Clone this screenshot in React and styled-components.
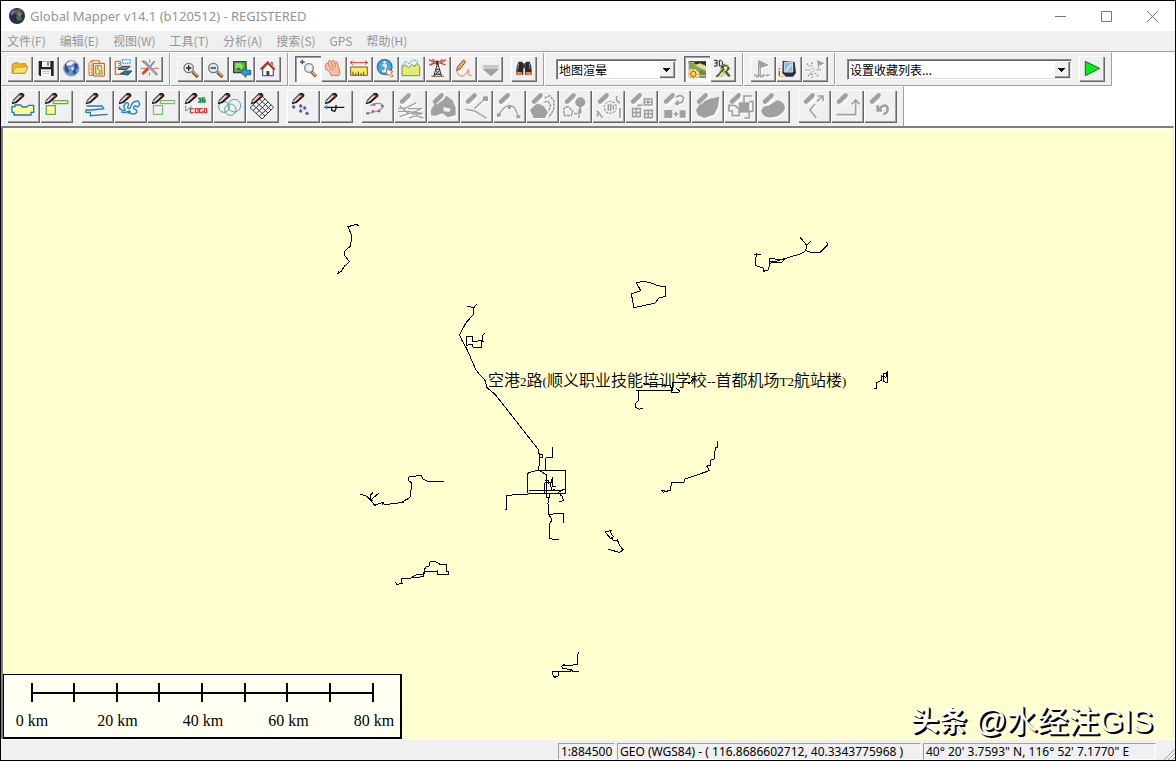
import React from 'react';
import styled, { createGlobalStyle, css } from 'styled-components';

const GlobalStyle = createGlobalStyle`
  * { box-sizing: border-box; }
  body { margin: 0; background: #fff; }
`;

const uiFont = "'Noto Sans', 'Noto Sans CJK SC', sans-serif";

const Window = styled.div`
  display: flex;
  flex-direction: column;
  height: 100vh;
  border: 1px solid #000;
  background: #fff;
  font: 12px/20px ${uiFont};
  color: #000;
  overflow: hidden;
`;

const TitleBar = styled.header`
  display: flex;
  align-items: center;
  gap: 5px;
  height: 30px;
  padding-left: 8px;
  background: #fff;
  color: #949494;
`;

const Title = styled.h1`
  flex: 1;
  margin: 0;
  font-size: 13px;
  font-weight: 400;
  white-space: nowrap;
`;

const Caption = styled.div`
  display: flex;
`;

const CaptionButton = styled.button`
  display: grid;
  place-items: center;
  width: 46px;
  height: 30px;
  padding: 0;
  border: 0;
  background: none;
`;

const MenuBar = styled.nav`
  display: flex;
  gap: 14px;
  height: 21px;
  padding-left: 6px;
  background: #f0f0f0;
  border-bottom: 1px solid #a0a0a0;
`;

const MenuItem = styled.button`
  padding: 0;
  border: 0;
  background: none;
  color: #969696;
  font: 12px/18px 'Noto Sans CJK SC', sans-serif;
  white-space: nowrap;
`;

const Rebar = styled.div`
  display: flex;
  flex-direction: column;
  align-items: flex-start;
  background: #fff;
`;

const Band = styled.div`
  display: flex;
  align-items: center;
  padding: 3px 6px;
  gap: ${p => (p.$tall ? '8px' : '0')};
  height: ${p => (p.$tall ? '40px' : '34px')};
  background: #f0f0f0;
  border-top: 1px solid #fff;
  border-right: 1px solid #a0a0a0;
  border-bottom: ${p => (p.$tall ? '0' : '1px solid #a0a0a0')};
`;

const Group = styled.div`
  display: flex;
  align-items: center;
  gap: ${p => p.$gap || 0}px;
`;

const Separator = styled.span`
  width: 2px;
  height: 33px;
  margin: 0 6px;
  border-left: 1px solid #a0a0a0;
  border-right: 1px solid #fff;
`;

const ToolButton = styled.button`
  display: block;
  flex: none;
  width: ${p => p.$size}px;
  height: ${p => p.$size}px;
  padding: 0;
  border: 0;
  background: #f0f0f0;
  box-shadow: inset 1px 1px 0 #fff, inset -1px -1px 0 #696969, inset -2px -2px 0 #a0a0a0;
  ${p => p.$pressed && css`
    background: #f8f8f8;
    box-shadow: inset 1px 1px 0 #696969, inset 2px 2px 0 #a0a0a0, inset -1px -1px 0 #fff;
  `}
  svg {
    display: block;
    width: 100%;
    height: 100%;
    ${p => p.disabled && 'filter: drop-shadow(1px 1px 0 #fff);'}
  }
`;

const ComboBox = styled.label`
  position: relative;
  display: flex;
  width: ${p => p.$width}px;
  height: 21px;
  margin: 0 7px 0 5px;
  border: 1px solid;
  border-color: #888 #fff #fff #888;
  background: #fff;
  box-shadow: inset 1px 1px 0 #696969, inset -1px -1px 0 #e3e3e3;
`;

const ComboSelect = styled.select`
  width: 100%;
  padding: 0 18px 0 2px;
  border: 0;
  appearance: none;
  background: transparent;
  color: #000;
  font: 12px/19px 'Noto Sans CJK SC', sans-serif;
`;

const ComboArrow = styled.span`
  position: absolute;
  top: 1px;
  right: 1px;
  width: 16px;
  height: 17px;
  background: #f0f0f0;
  box-shadow: inset 1px 1px 0 #fff, inset -1px -1px 0 #696969, inset -2px -2px 0 #a0a0a0;
  pointer-events: none;
  svg { display: block; }
`;

const MapView = styled.main`
  position: relative;
  flex: 1;
  min-height: 0;
  margin-right: 1px;
  border: solid #808080;
  border-width: 2px 0 0 2px;
  border-right: 1px solid #e8e8e8;
  background: #ffffcf;
  box-shadow: inset 0 1px 0 #fffff0;
  overflow: hidden;
`;

const Routes = styled.svg`
  position: absolute;
  left: 0;
  top: 0;
  width: 1170px;
  height: 611px;
  fill: none;
  stroke: #000;
  shape-rendering: crispEdges;
  polyline { vector-effect: non-scaling-stroke; }
`;

const RouteLabel = styled.span`
  position: absolute;
  left: 485px;
  top: 241px;
  font: 16px/20px 'Noto Sans CJK SC', sans-serif;
  font-weight: 350;
  white-space: nowrap;
`;

const Latin = styled.span`
  font: 13px 'Liberation Serif', serif;
`;

const ScaleBar = styled.div`
  position: absolute;
  left: 0;
  bottom: 0;
  width: 399px;
  height: 65px;
  border: solid #000;
  border-width: 1px 2px 2px 1px;
  background: #fffff2;
`;

const Ruler = styled.svg`
  display: block;
  width: 345px;
  height: 19px;
  margin: 8px 0 0 27px;
  shape-rendering: crispEdges;
`;

const ScaleLabels = styled.div`
  display: flex;
  justify-content: space-between;
  margin: 9px 4px 0 6px;
  font: 16px/20px 'Liberation Serif', serif;
`;

const ScaleLabel = styled.span`
  width: 44px;
  text-align: center;
`;

const Watermark = styled.div`
  position: absolute;
  right: 20px;
  bottom: 0;
  display: flex;
  align-items: center;
  gap: 8px;
  color: #fff;
  text-shadow: 1px 1px 0 #000, 2px 2px 0 #000;
  font: 31px/34px 'Liberation Sans', 'Noto Sans CJK SC', sans-serif;
  white-space: nowrap;
`;

const Brand = styled.strong`
  font-size: 28px;
  font-weight: 700;
`;

const StatusBar = styled.footer`
  display: flex;
  justify-content: flex-end;
  gap: 2px;
  height: 21px;
  padding-top: 3px;
  background: #f0f0f0;
  border-top: 1px solid #fff;
`;

const StatusCell = styled.span`
  width: ${p => p.$width}px;
  height: 17px;
  padding-left: 2px;
  border: 1px solid;
  border-color: #a0a0a0 #fff #fff #a0a0a0;
  line-height: 16px;
  white-space: nowrap;
`;

const Grip = styled.svg`
  width: 17px;
  height: 17px;
`;

const GRAY = '#a0a0a0';

const Icon = ({ x, y, size = 78, children }) => (
  <svg viewBox={`${x} ${y} ${size} ${size}`} fill="none" strokeWidth="3" aria-hidden="true">
    {children}
  </svg>
);

const Pencil = ({ x, y, off }) => (
  <g transform={`translate(${x} ${y})`}>
    {off ? (
      <path d="M24 35L44 16" stroke={GRAY} strokeWidth="13" strokeLinecap="round" />
    ) : (
      <>
        <path d="M14 43L18 30L39 9H47L52 14V19L29 39Z" fill="#15151a" />
        <path d="M23 33L40 17" stroke="#e2cfc8" strokeWidth="7" />
        <path d="M38 16L42 12L48 18L44 22Z" fill="#d8402f" />
        <path d="M18 37L20 31L25 36Z" fill="#fff" />
      </>
    )}
  </g>
);

const Lens = ({ x, y, minus }) => (
  <g>
    <path d={`M${x + 12} ${y + 12}l16 15`} stroke="#77562d" strokeWidth="10" />
    <path d={`M${x + 15} ${y + 12}l13 12`} stroke="#e6ae65" strokeWidth="5" />
    <circle cx={x} cy={y} r="14" fill="#dcebf0" stroke="#777" strokeWidth="4" />
    <path d={`M${x - 8} ${y}h16${minus ? '' : `M${x} ${y - 8}v16`}`} stroke="#22262e" strokeWidth="4" />
  </g>
);

const fileTools = [
  ['打开', 21, <><path d="M36 219L37 192L51 187L57 192L77 191L79 201L82 202L74 220Z" fill="#f4b726" stroke="#bd8a20" /><path d="M37 220L47 202L84 200L75 219Z" fill="#ffe570" stroke="#c99722" /></>],
  ['保存', 99, <><path d="M116 183H161V228H120L116 224Z" fill="#20242b" /><path d="M126 184H151V201H126Z" fill="#f4f4f4" /><path d="M123 208H153V228H123Z" fill="#fff" /><path d="M127 214H149M127 220H149" stroke="#b8b8b8" /><path d="M144 186V197" stroke="#555" strokeWidth="4" /></>],
  ['在线数据', 177, <><circle cx="214" cy="205" r="23" fill="#6d96cc" stroke="#8793b4" /><path d="M195 194L205 184L216 188L210 198L201 201L208 212L203 220L194 210ZM221 193L232 191L234 203L226 209L230 219L220 223L217 214L224 205Z" fill="#2c4f98" /><path d="M199 190Q211 180 224 186L213 196L200 198ZM212 204L222 201L219 212Z" fill="#edf4fc" /></>],
  ['目录', 255, <><path d="M267 190L274 182H298V226H267Z" fill="#fff" stroke="#d46a25" /><path d="M276 183V225" stroke="#d46a25" /><path d="M281 190H313V228H281Z" fill="#fff7d6" stroke="#af581f" /><path d="M287 196H304L307 222H287Z" fill="#f2e391" stroke="#6f9658" /><path d="M296 197L292 207L301 213L297 221" stroke="#6c8ac0" /><path d="M269 197H278M269 207H278M269 217H278" stroke="#ef9455" /></>],
  ['图层', 333, <><path d="M346 184V223H362M346 184H363M346 203H360" stroke="#e27543" strokeWidth="4" /><path d="M367 179H391V190H367Z" fill="#dff4ff" stroke="#3f94bd" strokeDasharray="4 2" /><path d="M354 208L367 199H391L379 209Z" fill="#777d92" stroke="#444" /><path d="M360 222L374 213H396L384 225Z" fill="#258356" stroke="#27598f" /><path d="M354 192L362 188V197H355" fill="#fff" stroke="#678" /></>],
  ['配置', 411, <><path d="M424 182L474 226M422 205H439M460 205H477M449 178V188M449 217V228" stroke="#db7042" /><path d="M429 183L436 188L470 223" stroke="#687c9c" strokeWidth="7" /><path d="M464 184L447 204" stroke="#7e8593" strokeWidth="5" /><path d="M445 205L427 222" stroke="#d34435" strokeWidth="8" /><path d="M431 184L468 221" stroke="#fff" strokeWidth="2" /></>],
];

const zoomTools = [
  ['放大', 531, <Lens x={566} y={204} />],
  ['缩小', 609, <Lens x={640} y={204} minus />],
  ['全图', 687, <><path d="M701 185H738V218H701Z" fill="#4aae35" stroke="#2a405f" strokeWidth="4" /><path d="M706 190H724L730 201L720 212H706Z" fill="#98dc67" /><path d="M706 209L716 201L726 213" fill="#33772b" /><path d="M752 211H739V203L722 217L738 232V224H752Z" fill="#3699ce" stroke="#175b8d" /></>],
  ['主页', 765, <><path d="M788 207V227H820V207L803 190Z" fill="#fff" stroke="#416bad" strokeWidth="4" /><path d="M799 227V213H808V227" fill="#653d2c" /><path d="M812 186H818V199" fill="#b82e21" /><path d="M782 208L803 187L824 209" stroke="#a8341f" strokeWidth="6" /><path d="M783 204L803 184L823 204" stroke="#e0573a" strokeWidth="2" /></>],
];

const modeTools = [
  ['缩放工具', 45, <><path d="M60 36H74M67 29V43" stroke="#285696" strokeWidth="4" /><path d="M94 65L108 79" stroke="#765c34" strokeWidth="10" /><path d="M96 66L108 77" stroke="#e1ba70" strokeWidth="5" /><circle cx="87" cy="54" r="13" fill="#e6f0ee" stroke="#858585" strokeWidth="4" /></>, true],
  ['平移', 123, <path d="M137 52C134 42 139 36 145 42C143 30 150 28 154 36C157 28 163 30 164 38C170 32 174 38 174 46L180 67L176 77H154L147 64L137 58ZM145 42L152 55M154 37L159 52M164 38L167 52M152 60L161 57" fill="#f8bda5" stroke="#cf8068" />],
  ['测量', 201, <><path d="M210 38H263M218 32L211 38L218 44M255 32L263 38L255 44" stroke="#d74430" /><path d="M212 51H262V76H212Z" fill="#ffe96a" stroke="#745c2b" /><path d="M219 75V65M227 75V69M235 75V65M243 75V69M251 75V65" stroke="#554922" /></>],
  ['要素信息', 279, <><circle cx="314" cy="51" r="22" fill="#46aadc" stroke="#2376ae" strokeWidth="4" /><path d="M307 46H317V62M306 64H325" stroke="#fff" strokeWidth="6" /><circle cx="314" cy="37" r="4" fill="#fff" /><path d="M319 56L339 65L332 69L339 78L334 81L326 72L321 77Z" fill="#fff" stroke="#c96631" /></>],
  ['剖面', 357, <><path d="M366 77V50L376 45L386 53L395 44L405 49L410 40L419 50V77Z" fill="#e2ed79" stroke="#749a3c" /><path d="M366 48L377 33L387 42L398 30L409 31L417 43" stroke="#5398c0" strokeDasharray="6 3" /></>],
  ['视域', 435, <><path d="M473 40L461 79M473 40L485 79M467 58H479M463 73H483M466 60L482 76M480 60L463 76" stroke="#303030" /><path d="M472 32V44" stroke="#333" strokeWidth="8" /><path d="M447 29L465 39L448 45M498 29L481 39L497 45M457 28L467 36M488 28L478 36" stroke="#d93a39" strokeWidth="4" /><path d="M454 79H492" stroke="#6a6232" /></>],
  ['数字化', 513, <><path d="M530 62L532 51L550 30L557 35L540 57Z" fill="#f3af60" stroke="#9f4c20" /><path d="M531 63C533 78 544 81 553 76S563 56 566 59S556 78 575 76" stroke="#d9854a" /></>],
  ['更多', 591, <><path d="M608 48H657M610 54H655" stroke={GRAY} /><path d="M608 57H657L633 79Z" fill={GRAY} /></>],
];

const findTool = ['查找', 693, <><path d="M708 74L710 50L716 35H727L730 43V74ZM735 74V43L738 35H749L754 50L756 74Z" fill="#292929" /><path d="M728 40H738V55H728Z" fill="#444" /><path d="M716 41L713 58M747 41L750 58" stroke="#8d8d8d" /><path d="M708 66H727V75H708ZM737 66H756V75H737Z" fill="#cf7046" /><path d="M713 65L721 73M741 66L751 73" stroke="#f2bb95" /></>];

const shaderTools = [
  ['地形渲晕', 372, <><path d="M386 34H438V83H386Z" fill="#8ba454" /><path d="M386 34H438V51H420L403 40H386Z" fill="#263321" /><path d="M404 45L421 40L438 49V61L420 54Z" fill="#e8dba8" /><path d="M418 60L438 66V83H413Z" fill="#6d8a4c" /><path d="M386 58H408L418 70V83H386Z" fill="#fbe9a0" /><path d="M387 38H404M417 46H435M420 77H437" stroke="#bde293" /><path d="M388 60L412 84M412 60L388 84M400 56V87M385 72H416" stroke="#ff8c26" strokeWidth="3" /><circle cx="400" cy="72" r="8" fill="#ffe943" stroke="#e53b25" /></>, true],
  ['三维视图', 450, <><path d="M462 31H471V48H462M464 39H471M478 31V48H482L487 43V35L482 31Z" stroke="#1d1d1d" /><path d="M466 81L477 70L481 53L493 42L505 44L511 57L503 63L514 77L503 82L494 72L486 81Z" fill="#c3ca84" /><path d="M483 54L491 46L490 58L478 72L469 80M497 45L506 55L497 65L509 79" stroke="#3c4d33" strokeWidth="5" /><path d="M491 55L500 52L497 62M480 76L488 67" stroke="#fff1c5" strokeWidth="4" /></>],
];

const gpsTools = [
  ['开始跟踪', 570, <><path d="M596 32L624 45L601 53V76" fill={GRAY} stroke={GRAY} /><path d="M596 32V76" stroke={GRAY} strokeWidth="4" /><path d="M582 76H630M588 80H610" stroke={GRAY} strokeWidth="5" strokeDasharray="10 2" /></>, false, true],
  ['定位', 648, <><path d="M668 32L704 36L708 69L699 80H678L667 70Z" fill="#29313d" /><path d="M673 37H698V66H673Z" fill="#8eb8e6" stroke="#d9e5f2" /><path d="M678 63L694 42" stroke="#d9ecff" strokeWidth="5" /><path d="M658 62V79M658 54V58" stroke="#d32" strokeWidth="4" /><path d="M662 79H670" stroke="#ee9431" /></>],
  ['标记', 726, <><path d="M741 41L751 51M744 78L756 68M756 37V48M737 60H748M770 60H785M757 71V85M765 69L776 80" stroke={GRAY} strokeWidth="5" strokeDasharray="5 3" /><circle cx="757" cy="60" r="6" stroke={GRAY} strokeDasharray="4 2" /><path d="M771 32L791 40L776 46V57" fill={GRAY} stroke={GRAY} /></>, false, true],
];

const runTool = ['运行', 717, <path d="M736 184V227L779 205Z" fill="#00ef1a" stroke="#146722" />];

const areaTools = [
  ['新建面', 21, <path d="M36 320V337H42V345H93V337H101V316H86L80 321H67L62 315H45V320Z" fill="#ffffa0" stroke="#2474b5" strokeWidth="4" />],
  ['新建矩形', 120, <><path d="M139 317H166V343H139Z" fill="#ffffa0" stroke="#61ae50" strokeWidth="4" /><path d="M160 302H203V311H160Z" fill="#f4f9b4" stroke="#61ae50" strokeWidth="4" /></>],
];

const drawTools = [
  ['新建线', 243, <path d="M260 318H306L311 326L275 330H258V337H271V347L323 343" stroke="#237bb9" strokeWidth="4" />],
  ['新建曲线', 342, <path d="M360 319Q355 326 365 329Q382 338 371 319Q381 300 386 313Q378 328 390 324L398 308Q414 298 418 308Q421 316 412 321Q400 313 401 326Q418 333 406 341Q389 345 387 333Q375 341 363 335M383 340L392 334" stroke="#2480bd" strokeWidth="4" />],
  ['矩形线', 441, <path d="M460 317H488V343H460ZM481 302H524V311H481Z" stroke="#61ae50" strokeWidth="3" />],
  ['坐标几何', 540, <><path d="M557 317V333L576 318" stroke="#4f9cd0" strokeWidth="3" /><path d="M594 295H602V300H597H602V306H594M615 294H607V306H615V300H607" stroke="#138d3e" strokeWidth="4" /><path d="M581 326H571V338H581M586 326H594V338H586ZM608 326H599V338H608V332M613 326H620V338H613Z" stroke="#d13b36" strokeWidth="4" /></>],
  ['距离环', 639, <><circle cx="672" cy="321" r="16" stroke="#58a88d" /><circle cx="691" cy="329" r="17" stroke="#59a96e" /><circle cx="703" cy="317" r="19" stroke="#4e9dca" /></>],
  ['网格', 738, <path d="M750 323L786 288L821 322L786 357ZM759 314L795 348M768 305L804 339M777 296L813 330M759 332L795 297M768 341L804 306M777 350L813 315" stroke="#303b3c" />],
];

const pointTools = [
  ['新建点', 21, <path d="M36 171H46M41 166V176M57 168H67M62 163V173M57 183H67M62 178V188M69 174H79M74 169V179M76 190H86M81 185V195" stroke="#61539a" strokeWidth="5" />],
  ['移动点', 120, <><path d="M133 172H193M155 172V181L164 184L168 176V165" stroke="#151515" strokeWidth="4" /><path d="M140 165V178" stroke="#398de1" strokeWidth="4" /></>],
];

const vertexTool = ['编辑折点', 243, <><path d="M271 167Q281 158 301 161Q311 164 307 174Q288 188 259 191" stroke="#6ca0cb" strokeWidth="4" /><path d="M278 165H286M303 168H311M259 190H267M275 183H283M293 184H301" stroke="#db3029" strokeWidth="5" /></>];

const editTools = [
  ['变形', 342, 120, <path d="M354 175H376L393 166M354 184H380L405 187L428 190M359 200L386 191L406 185L427 174M359 167L386 191M391 168L409 158M384 176H424M388 204L409 197L430 204M395 192H425" stroke={GRAY} strokeWidth="4" />],
  ['平滑', 441, 120, <path d="M453 180L465 160L487 152L499 137L518 151L527 173V196L503 202L488 190L466 198L453 196ZM490 172L512 176L508 186L492 184Z" fill={GRAY} fillRule="evenodd" />],
  ['分割', 540, 120, <><path d="M556 178L584 183L620 205M583 176L616 145" stroke={GRAY} strokeWidth="4" /><path d="M609 139H624V153H609Z" fill={GRAY} /></>],
  ['延长', 639, 120, <><path d="M657 194Q679 155 704 173L715 199" stroke={GRAY} strokeWidth="4" /><path d="M651 190H662V200H651ZM684 166H693V177H684ZM709 196H721V205H709Z" fill={GRAY} /></>],
  ['复制', 738, 120, <><path d="M750 180L771 160L791 168L804 187L795 204H761Z" fill={GRAY} /><path d="M794 144L809 137L822 153V177L807 202M793 156L804 154L812 166L806 184" stroke={GRAY} strokeWidth="5" strokeDasharray="9 2" /></>],
  ['旋转', -3, 120, <><path d="M11 180Q13 171 25 170L38 183L34 197H14ZM57 204V181L66 187M42 191H58" stroke={GRAY} strokeWidth="5" strokeDasharray="9 2" /><circle cx="61" cy="157" r="15" fill={GRAY} /><path d="M61 170V191" stroke={GRAY} strokeWidth="6" /></>],
  ['缩放', 96, 120, <><circle cx="151" cy="172" r="18" stroke={GRAY} strokeDasharray="8 3" strokeWidth="4" /><path d="M145 163V182M152 161V184M160 166V179M111 182L128 203M170 138V151L180 160M113 190V200M180 174V204" stroke={GRAY} strokeWidth="5" /></>],
  ['阵列', 195, 120, <path d="M218 176H241V200H218ZM253 147H276V165H253ZM254 181H277V203H254ZM229 176V200M217 188H241M264 147V165M253 156H276M265 181V203M254 192H277M232 166H247" stroke={GRAY} strokeWidth="5" />],
  ['转换', 294, 120, <><path d="M313 180H337V204H313ZM359 181H377V203H359Z" fill={GRAY} /><path d="M348 143Q361 130 371 144L367 157L348 161M355 152L347 161L356 165M341 192H355M348 185V199" stroke={GRAY} strokeWidth="5" /></>],
  ['合并', 393, 120, <path d="M408 181L422 158L449 146L478 140L474 171L462 194L433 204L414 196Z" fill={GRAY} />],
  ['裁剪', 492, 120, <><path d="M536 157H568V188H536Z" fill={GRAY} /><path d="M507 166H523L538 177V197H517V183H507ZM577 138H552V158M568 155H579V184H568V204H553" stroke={GRAY} strokeWidth="5" /></>],
  ['缓冲区', 591, 120, <path d="M604 184Q606 168 624 168L651 151Q676 156 675 176Q665 199 637 202Q611 206 604 184Z" fill={GRAY} />],
];

const undoTools = [
  ['移动折线', 714, 120, <path d="M769 204L750 180L765 162M771 155L788 138M773 138H789V154" stroke={GRAY} strokeWidth="5" />],
  ['插入折线', 813, 120, <path d="M830 194H887V151M875 163L887 150L899 163" stroke={GRAY} strokeWidth="5" />],
  ['撤销', 72, 270, <path d="M113 316V331H126M115 329L127 319Q139 312 143 325Q144 339 130 343" stroke={GRAY} strokeWidth="8" />],
];

const SmallTools = ({ items, y }) => (
  <Group>
    {items.map(([name, x, art, pressed, disabled]) => (
      <ToolButton key={name} $size={26} $pressed={pressed} disabled={disabled} aria-label={name}>
        <Icon x={x} y={y}>{art}</Icon>
      </ToolButton>
    ))}
  </Group>
);

const LargeTools = ({ items, y }) => (
  <Group>
    {items.map(([name, x, art]) => (
      <ToolButton key={name} $size={33} aria-label={name}>
        <Icon x={x} y={y} size={99}>{art}<Pencil x={x} y={y} /></Icon>
      </ToolButton>
    ))}
  </Group>
);

const DisabledTools = ({ items }) => (
  <Group>
    {items.map(([name, x, y, art]) => (
      <ToolButton key={name} $size={33} disabled aria-label={name}>
        <Icon x={x} y={y} size={99}>
          {art}
          <path d={`M${x + 24} ${y + 36}L${x + 44} ${y + 17}`} stroke="#f0f0f0" strokeWidth="20" />
          <Pencil x={x} y={y} off />
        </Icon>
      </ToolButton>
    ))}
  </Group>
);

const Combo = ({ label, value, width }) => (
  <ComboBox $width={width}>
    <ComboSelect aria-label={label}><option>{value}</option></ComboSelect>
    <ComboArrow>
      <svg width="16" height="17" shapeRendering="crispEdges"><path d="M4 7H11L7.5 11Z" /></svg>
    </ComboArrow>
  </ComboBox>
);

/* Route geometry, grouped by survey tile; each tile is stored at three units per map pixel. */
const tiles = [
  [320, 210, [
    '116,48 110,43 84,50 95,76 92,108 73,124 75,138 88,155 72,170 64,184 54,190 55,182',
    '470,283 462,292 462,312 438,338 419,374 424,388 440,416 468,480',
    '441,289 464,293',
    '494,369 488,376 488,392 458,394 458,380 440,380 440,406 456,403 459,412 485,412 485,396 491,396',
  ]],
  [480, 360, [
    '-12,30 0,45 16,62 20,82 46,104 176,270 179,300 176,330 200,345 200,362',
    '179,284 188,284 188,292 179,292',
    '217,262 217,292 198,294 198,330',
    '143,400 143,340 160,334 176,331 255,331 257,400 146,402',
    '146,391 240,391', '76,448 79,448 79,406 146,402',
    '194,368 194,400 208,400 208,412 200,412', '194,368 212,368 214,391 226,388',
    '217,350 217,380 228,380', '214,356 214,370', '196,362 206,362 206,372',
    '200,362 200,412 206,414 204,430 206,463 250,460 250,490',
    '206,463 216,480 208,492 208,536 226,538 238,540',
    '236,425 250,422 248,410 240,404', '234,398 244,391 255,388',
    '468,92 577,91 577,68', '475,92 475,122 467,130 467,142 478,148 488,145',
    '488,70 505,75 530,72 550,76 575,75', '572,75 575,97 598,96 598,92 588,84',
    '577,68 600,66 630,70 640,56 634,52 646,48',
    '714,243 712,262 706,262 703,297 693,300 693,316 680,318 688,332 613,358 613,366 574,368 572,390 550,397 544,391 556,391',
  ]],
  [600, 220, [
    '600,52 612,66 620,76 617,92 604,101 560,114 510,130 505,150 490,154 490,144 466,136 469,98',
    '462,105 484,105', '632,64 620,76', '617,92 630,96 660,97 684,74 680,66',
    '510,130 510,116 552,119 545,128 510,125',
    '109,188 134,184 158,190 172,197 197,200 197,229 176,234 166,249 102,263 94,222 122,212 109,188',
    '823,505 830,504 830,488 846,480 846,468 858,472 862,452', '862,452 862,488 850,484 850,462 860,460',
  ]],
  [340, 460, [
    '60,102 78,108 92,120 104,136 126,128 134,134 184,128 210,112 216,70 206,62 206,51 243,46 248,56 268,66 312,64',
    '92,120 92,104 100,97', '92,120 116,100', '80,108 98,122', '190,128 194,120 208,116', '126,136 132,128',
    '166,366 170,374 186,370 184,356 212,354 230,344 250,344 256,322 268,318 270,305 286,305 302,314 320,312 320,334 326,336 326,343 292,343 292,333 254,336 250,350 214,354',
    '796,216 814,211 812,218 820,230 812,236 796,216', '816,232 820,242 832,240 840,258 850,270 838,277 820,272 803,267',
    '716,577 711,590 713,614 685,616 665,618 668,626 692,628 700,636 718,635',
    '692,636 638,636 638,644 644,652 654,648 656,636', '680,616 668,614', '685,636 698,630',
  ]],
];

const ticks = [1, 43, 86, 128, 171, 214, 256, 299, 342];
const menus = ['文件(F)', '编辑(E)', '视图(W)', '工具(T)', '分析(A)', '搜索(S)', 'GPS', '帮助(H)'];

export default function App() {
  return (
    <>
      <GlobalStyle />
      <Window>
        <TitleBar>
          <svg width="16" height="16" viewBox="0 0 16 16" aria-hidden="true">
            <circle cx="8" cy="8" r="8" fill="#262d4b" />
            <path d="M6 2L11 1L14 5L12 8L13 12L9 13L7 10L8 7L5 5Z" fill="#56634f" />
            <path d="M2 4L6 1L5 5L2 8Z" fill="#7379a2" />
            <path d="M9 4L12 6L10 9Z" fill="#8b8f67" />
          </svg>
          <Title>Global Mapper v14.1 (b120512) - REGISTERED</Title>
          <Caption>
            <CaptionButton aria-label="最小化"><svg width="11" height="11" stroke="#777"><path d="M0 5.5H11" /></svg></CaptionButton>
            <CaptionButton aria-label="最大化"><svg width="11" height="11" stroke="#777" fill="none"><path d="M.5 .5H10.5V10.5H.5Z" /></svg></CaptionButton>
            <CaptionButton aria-label="关闭"><svg width="11" height="11" stroke="#777"><path d="M0 0L11 11M11 0L0 11" /></svg></CaptionButton>
          </Caption>
        </TitleBar>
        <MenuBar>
          {menus.map(m => <MenuItem key={m}>{m}</MenuItem>)}
        </MenuBar>
        <Rebar>
          <Band>
            <SmallTools items={fileTools} y={168} />
            <Separator />
            <SmallTools items={zoomTools} y={168} />
            <Separator />
            <Group $gap={8}>
              <SmallTools items={modeTools} y={18} />
              <SmallTools items={[findTool]} y={18} />
            </Group>
            <Separator />
            <Combo label="渲染方式" value="地图渲晕" width={121} />
            <SmallTools items={shaderTools} y={18} />
            <Separator />
            <SmallTools items={gpsTools} y={18} />
            <Separator />
            <Combo label="收藏列表" value="设置收藏列表..." width={225} />
            <SmallTools items={[runTool]} y={168} />
          </Band>
          <Band $tall>
            <LargeTools items={areaTools} y={270} />
            <LargeTools items={drawTools} y={270} />
            <LargeTools items={pointTools} y={120} />
            <Group>
              <LargeTools items={[vertexTool]} y={120} />
              <DisabledTools items={editTools} />
            </Group>
            <DisabledTools items={undoTools} />
          </Band>
        </Rebar>
        <MapView>
          <Routes viewBox="3 128 1170 611">
            {tiles.map(([x, y, lines]) => (
              <g key={`${x}-${y}`} transform={`translate(${x} ${y}) scale(0.33333)`}>
                {lines.map(points => <polyline key={points} points={points} />)}
              </g>
            ))}
          </Routes>
          <RouteLabel>
            空港<Latin>2</Latin>路<Latin>(</Latin>顺义职业技能培训学校<Latin>--</Latin>首都机场<Latin>T2</Latin>航站楼<Latin>)</Latin>
          </RouteLabel>
          <ScaleBar>
            <Ruler>
              <path d="M0 9H343V11H0Z" />
              {ticks.map(t => <path key={t} d={`M${t - 1} 0h2v19h-2z`} />)}
            </Ruler>
            <ScaleLabels>
              {[0, 20, 40, 60, 80].map(n => <ScaleLabel key={n}>{n} km</ScaleLabel>)}
            </ScaleLabels>
          </ScaleBar>
          <Watermark><Brand>头条</Brand><span>@水经注GIS</span></Watermark>
        </MapView>
        <StatusBar>
          <StatusCell $width={57}>1:884500</StatusCell>
          <StatusCell $width={304}>GEO (WGS84) - ( 116.8686602712, 40.3343775968 )</StatusCell>
          <StatusCell $width={233}>40° 20' 3.7593" N, 116° 52' 7.1770" E</StatusCell>
          <Grip stroke="#a0a0a0" aria-hidden="true"><path d="M6 17L17 6M10 17L17 10M14 17L17 14" /></Grip>
        </StatusBar>
      </Window>
    </>
  );
}
